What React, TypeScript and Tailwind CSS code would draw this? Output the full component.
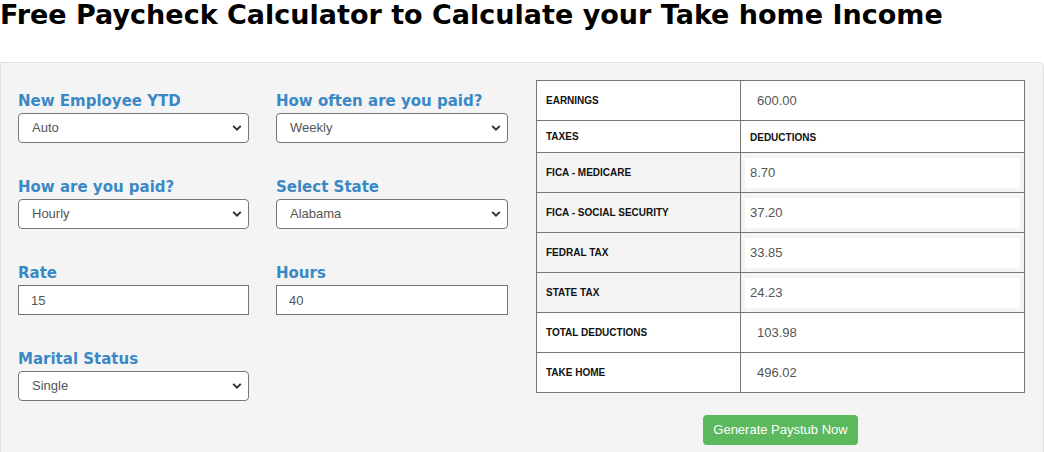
import { useState } from "react";

type Row = {
  label: string;
  value: string;
  input?: boolean;
  header?: boolean;
};

const rows: Row[] = [
  { label: "EARNINGS", value: "600.00" },
  { label: "TAXES", value: "DEDUCTIONS", header: true },
  { label: "FICA - MEDICARE", value: "8.70", input: true },
  { label: "FICA - SOCIAL SECURITY", value: "37.20", input: true },
  { label: "FEDRAL TAX", value: "33.85", input: true },
  { label: "STATE TAX", value: "24.23", input: true },
  { label: "TOTAL DEDUCTIONS", value: "103.98" },
  { label: "TAKE HOME", value: "496.02" },
];

function Chevron() {
  return (
    <svg
      width="10"
      height="7"
      viewBox="0 0 10 7"
      className="pointer-events-none absolute right-[7px] top-1/2 -translate-y-1/2"
    >
      <path d="M1.2 1.4 5 5.2 8.8 1.4" fill="none" stroke="#333" strokeWidth="2" />
    </svg>
  );
}

function SelectField({ label, value, options }: { label: string; value: string; options: string[] }) {
  const [v, setV] = useState(value);
  return (
    <div className="flex flex-col">
      <label className="mb-[2px] text-[15px] leading-[20px] font-bold text-[#3a88c5] font-['DejaVu_Sans',sans-serif]">
        {label}
      </label>
      <div className="relative">
        <select
          value={v}
          onChange={(e) => setV(e.target.value)}
          className="h-[30px] w-full appearance-none rounded-[4px] border border-[#767676] bg-white pl-[13px] text-[13px] text-[#555] font-['Liberation_Sans',Arial,sans-serif] outline-none"
        >
          {options.map((o) => (
            <option key={o}>{o}</option>
          ))}
        </select>
        <Chevron />
      </div>
    </div>
  );
}

function InputField({ label, value }: { label: string; value: string }) {
  const [v, setV] = useState(value);
  return (
    <div className="flex flex-col">
      <label className="mb-[2px] text-[15px] leading-[20px] font-bold text-[#3a88c5] font-['DejaVu_Sans',sans-serif]">
        {label}
      </label>
      <input
        value={v}
        onChange={(e) => setV(e.target.value)}
        className="h-[30px] w-full border border-[#767676] bg-white pl-[12px] text-[13px] text-[#555] font-['Liberation_Sans',Arial,sans-serif] outline-none"
      />
    </div>
  );
}

export default function App() {
  return (
    <div className="w-[1044px] h-[452px] overflow-hidden bg-white font-['Liberation_Sans',Arial,sans-serif]">
      <h1 className="m-0 text-[27px] leading-[30px] font-bold text-black font-['DejaVu_Sans',Verdana,sans-serif]">
        Free Paycheck Calculator to Calculate your Take home Income
      </h1>

      {/* calculator panel */}
      <div className="mt-[32px] h-[420px] rounded-tr-[4px] border border-[#e3e3e3] bg-[#f4f4f4] flex items-start">
        <div className="w-[535px] pl-[17px] pt-[28px] grid grid-cols-[231px_232px] gap-x-[27px] gap-y-[34px]">
          <SelectField label="New Employee YTD" value="Auto" options={["Auto", "Manual"]} />
          <SelectField label="How often are you paid?" value="Weekly" options={["Weekly", "Bi-Weekly", "Monthly"]} />
          <SelectField label="How are you paid?" value="Hourly" options={["Hourly", "Salary"]} />
          <SelectField label="Select State" value="Alabama" options={["Alabama", "Alaska", "Arizona"]} />
          <InputField label="Rate" value="15" />
          <InputField label="Hours" value="40" />
          <SelectField label="Marital Status" value="Single" options={["Single", "Married"]} />
        </div>

        <div className="pt-[17px] flex flex-col items-center">
          <table className="w-[489px] border-collapse border border-[#777]">
            <tbody>
              {rows.map((r) => (
                <tr
                  key={r.label}
                  className={`${r.header ? "h-[32px]" : "h-[40px]"} ${r.input ? "bg-[#f4f4f4]" : "bg-white"}`}
                >
                  <td className="w-[204px] border border-[#777] pl-[9px] text-[10px] leading-[12px] font-bold text-[#111]">
                    {r.label}
                  </td>
                  <td className="border border-[#777] p-0 align-middle leading-[12px]">
                    {r.input ? (
                      <div className="px-[4px]">
                        <input
                          readOnly
                          value={r.value}
                          className="h-[30px] w-full bg-white pl-[5px] text-[13px] text-[#555] outline-none"
                        />
                      </div>
                    ) : r.header ? (
                      <span className="pl-[9px] text-[10px] font-bold text-[#111]">{r.value}</span>
                    ) : (
                      <span className="pl-[16px] text-[13px] text-[#555]">{r.value}</span>
                    )}
                  </td>
                </tr>
              ))}
            </tbody>
          </table>
          <button className="mt-[22px] h-[30px] rounded-[4px] bg-[#5cb85c] px-[10px] text-[13px] text-white">
            Generate Paystub Now
          </button>
        </div>
      </div>
    </div>
  );
}
